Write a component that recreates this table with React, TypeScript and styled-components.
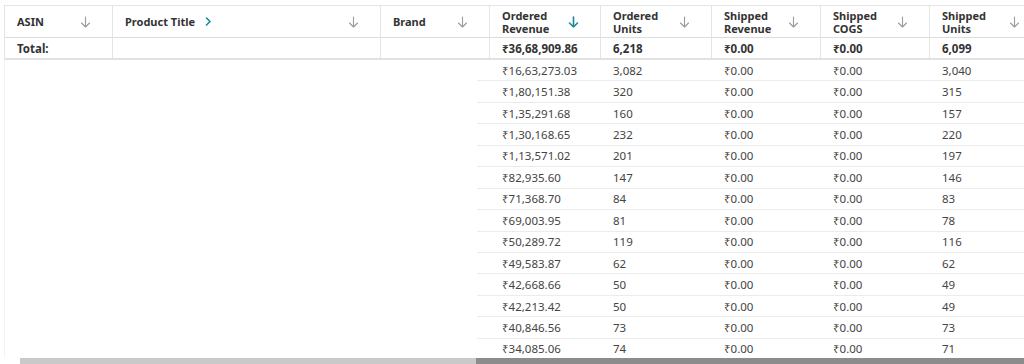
import React from 'react';
import styled, { createGlobalStyle } from 'styled-components';

const GlobalStyle = createGlobalStyle`
  * { box-sizing: border-box; }
  html, body { margin: 0; padding: 0; background: #fff; }
  body {
    font-family: 'Noto Sans', 'Open Sans', sans-serif;
    color: #333;
    -webkit-font-smoothing: antialiased;
  }
`;

const COLS = '108px 268px 109px 111px 111px 109px 109px 111px';

const Page = styled.div`
  width: 1024px;
  height: 364px;
  overflow: hidden;
  display: flex;
  flex-direction: column;
  padding: 5px 0 0 4px;
`;

const HeadGrid = styled.div`
  display: grid;
  grid-template-columns: ${COLS};
  border-top: 1px solid #e4e4e4;
  border-left: 1px solid #e4e4e4;
`;

const HeadCell = styled.div<{ $last?: boolean }>`
  height: 32px;
  display: flex;
  align-items: center;
  justify-content: space-between;
  padding: 0 21px 0 12px;
  border-right: ${(p) => (p.$last ? 'none' : '1px solid #e4e4e4')};
  border-bottom: 1px solid #dcdcdc;
  font-size: 11px;
  font-weight: 700;
  line-height: 13px;
  color: #333;
`;

const Label = styled.span`
  display: flex;
  align-items: center;
  gap: 10px;
`;

const TotalCell = styled.div<{ $last?: boolean }>`
  height: 22px;
  display: flex;
  align-items: center;
  padding-left: 12px;
  border-right: ${(p) => (p.$last ? 'none' : '1px solid #e4e4e4')};
  border-bottom: 2px solid #e2e2e2;
  font-size: 11.5px;
  font-weight: 700;
  color: #333;
`;

const Body = styled.div`
  flex: 1;
  overflow: hidden;
  padding-left: 472px;
  border-left: 1px solid #f4f4f4;
`;

const Row = styled.div`
  display: grid;
  grid-template-columns: 124px 111px 109px 109px 1fr;
  height: 21.45px;
  align-items: center;
  border-bottom: 1px solid #ececec;
  font-size: 11.5px;
  color: #444;
`;

const Cell = styled.div<{ $first?: boolean }>`
  padding-left: ${(p) => (p.$first ? '25px' : '12px')};
  white-space: nowrap;
`;

const Scrollbar = styled.div`
  height: 6px;
  margin-left: 16px;
  display: flex;
  background: #c9c9c9;
`;

const Thumb = styled.div`
  margin-left: 456px;
  flex: 1;
  background: #8c8c8c;
`;

const SortArrow = ({ active }: { active?: boolean }) => (
  <svg width="11" height="12" viewBox="0 0 11 12" fill="none">
    <path
      d="M5.5 1v10M1.5 7l4 4 4-4"
      stroke={active ? '#1a8a9a' : '#9a9a9a'}
      strokeWidth={active ? 1.6 : 1.1}
      strokeLinecap="round"
      strokeLinejoin="round"
    />
  </svg>
);

const Chevron = () => (
  <svg width="7" height="9" viewBox="0 0 7 9" fill="none">
    <path d="M1.5 1l3.5 3.5L1.5 8" stroke="#1a8a9a" strokeWidth="1.6" strokeLinecap="round" strokeLinejoin="round" />
  </svg>
);

type Head = { label: React.ReactNode; chevron?: boolean; active?: boolean };

const heads: Head[] = [
  { label: 'ASIN' },
  { label: 'Product Title', chevron: true },
  { label: 'Brand' },
  { label: <>Ordered<br />Revenue</>, active: true },
  { label: <>Ordered<br />Units</> },
  { label: <>Shipped<br />Revenue</> },
  { label: <>Shipped<br />COGS</> },
  { label: <>Shipped<br />Units</> },
];

const totals = ['Total:', '', '', '₹36,68,909.86', '6,218', '₹0.00', '₹0.00', '6,099'];

const rows: [string, string, string][] = [
  ['₹16,63,273.03', '3,082', '3,040'],
  ['₹1,80,151.38', '320', '315'],
  ['₹1,35,291.68', '160', '157'],
  ['₹1,30,168.65', '232', '220'],
  ['₹1,13,571.02', '201', '197'],
  ['₹82,935.60', '147', '146'],
  ['₹71,368.70', '84', '83'],
  ['₹69,003.95', '81', '78'],
  ['₹50,289.72', '119', '116'],
  ['₹49,583.87', '62', '62'],
  ['₹42,668.66', '50', '49'],
  ['₹42,213.42', '50', '49'],
  ['₹40,846.56', '73', '73'],
  ['₹34,085.06', '74', '71'],
];

export default function App() {
  return (
    <>
      <GlobalStyle />
      <Page>
        <HeadGrid>
          {heads.map((h, i) => (
            <HeadCell key={i} $last={i === heads.length - 1}>
              <Label>
                <span>{h.label}</span>
                {h.chevron && <Chevron />}
              </Label>
              <SortArrow active={h.active} />
            </HeadCell>
          ))}
          {totals.map((t, i) => (
            <TotalCell key={'t' + i} $last={i === totals.length - 1}>
              {t}
            </TotalCell>
          ))}
        </HeadGrid>
        <Body>
          {rows.map((r, i) => (
            <Row key={i}>
              <Cell $first>{r[0]}</Cell>
              <Cell>{r[1]}</Cell>
              <Cell>₹0.00</Cell>
              <Cell>₹0.00</Cell>
              <Cell>{r[2]}</Cell>
            </Row>
          ))}
        </Body>
        <Scrollbar>
          <Thumb />
        </Scrollbar>
      </Page>
    </>
  );
}
